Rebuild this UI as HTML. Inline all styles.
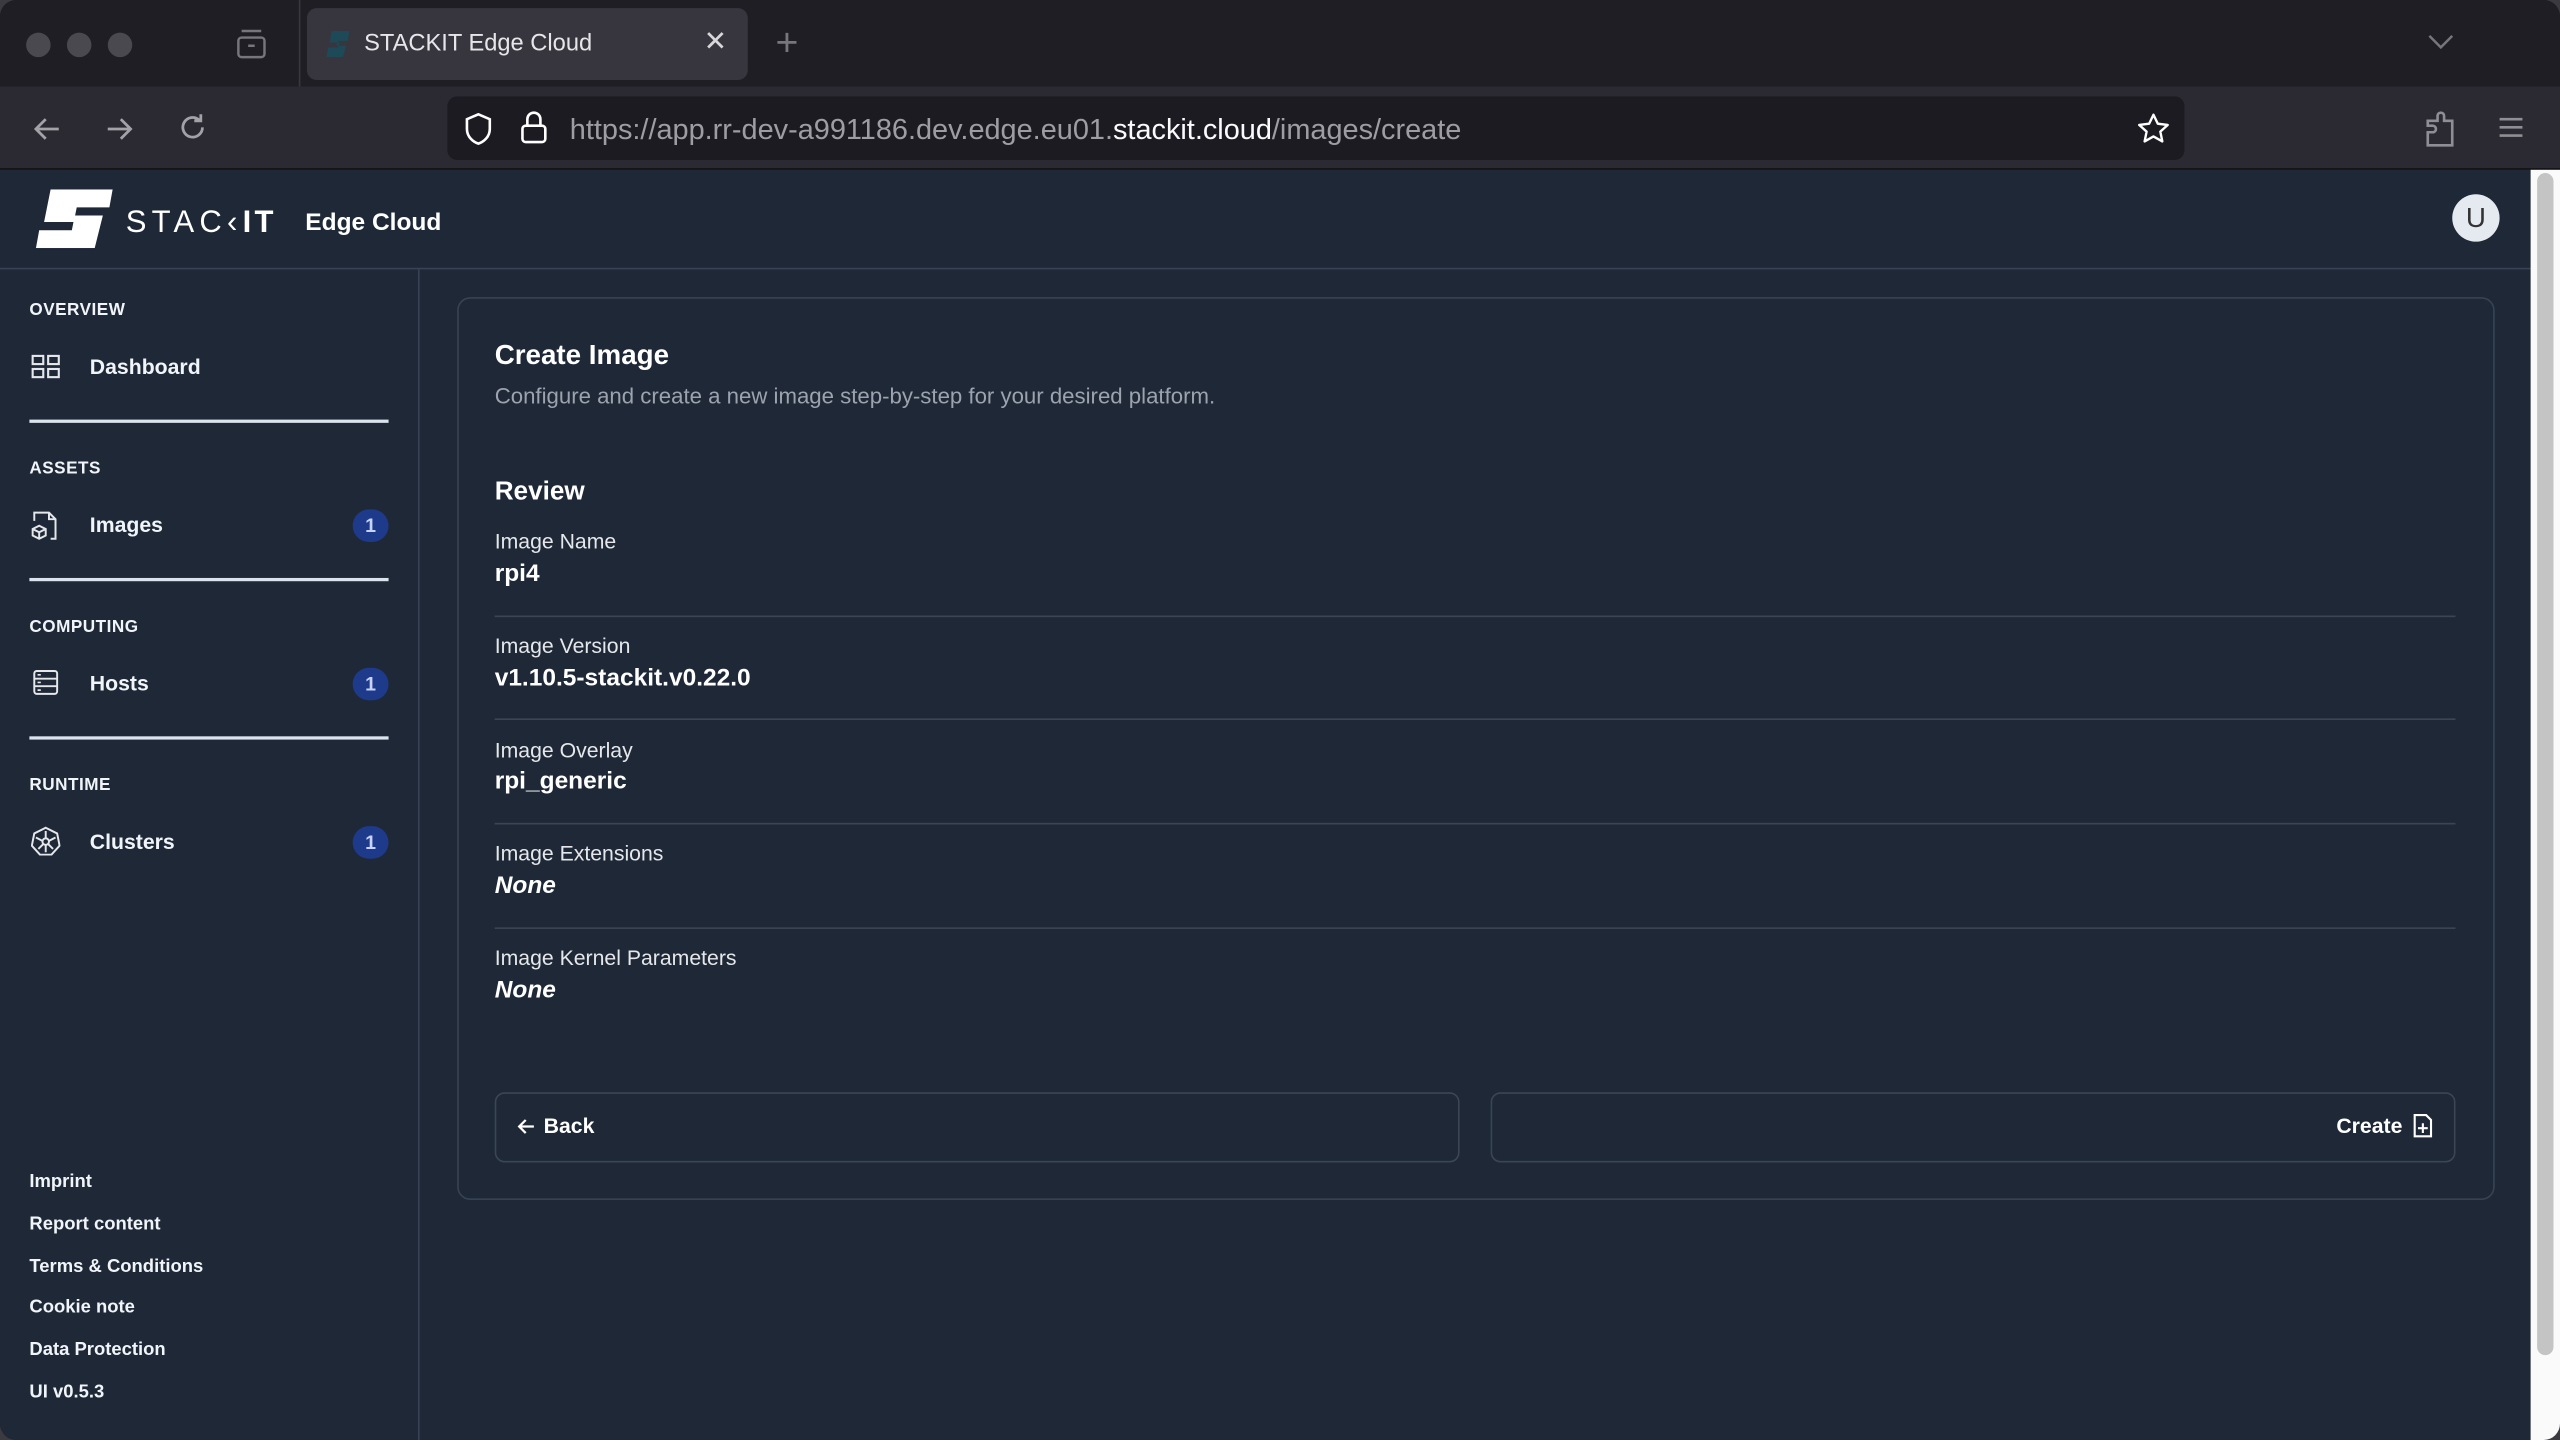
<!DOCTYPE html>
<html><head><meta charset="utf-8"><style>
html,body{margin:0;padding:0;width:2560px;height:1440px;overflow:hidden;background:#3a3a40;}
#w{position:absolute;left:0;top:0;width:1568px;height:882px;transform:scale(1.632653);transform-origin:0 0;font-family:"Liberation Sans",sans-serif;overflow:hidden;border-radius:10px;background:#1f1e25;}
.abs{position:absolute;}
.tabbar{left:0;top:0;width:1568px;height:53px;background:#1f1e25;}
.tool{left:0;top:53px;width:1568px;height:50px;background:#2b2a33;border-bottom:1px solid #111;}
.app{left:0;top:104px;width:1550px;height:778px;background:#1e2836;}
.sb{left:1550px;top:104px;width:18px;height:778px;background:#fafafa;}
.sbt{left:1554px;top:106px;width:10px;height:724px;background:#c4c4c4;border-radius:5px;}
.txt{color:#fff;white-space:nowrap;}
.nav{font-size:13px;font-weight:bold;color:#f1f5f9;}
.sec{font-size:10.5px;font-weight:bold;color:#f1f5f9;letter-spacing:.3px;}
.hr{height:2px;background:#dbe3ee;left:18px;width:220px;}
.badge{width:22px;height:20px;border-radius:11px;background:#1e3a8a;color:#c7d2fe;font-size:12px;font-weight:bold;text-align:center;line-height:20px;}
.lab{font-size:13px;color:#e5e7eb;}
.val{font-size:15px;font-weight:bold;color:#fff;}
.div{left:303px;width:1201px;height:1px;background:#3a4656;}
.foot{font-size:11.3px;font-weight:bold;color:#f1f5f9;left:18px;}
</style></head><body><div id="w">
<div class="abs tabbar"></div>
<div class="abs" style="left:16px;top:20px;width:15px;height:15px;border-radius:50%;background:#4a4950"></div>
<div class="abs" style="left:41px;top:20px;width:15px;height:15px;border-radius:50%;background:#4a4950"></div>
<div class="abs" style="left:66px;top:20px;width:15px;height:15px;border-radius:50%;background:#4a4950"></div>
<svg class="abs" style="left:144px;top:17px" width="20" height="20" viewBox="0 0 20 20" fill="none" stroke="#77767d" stroke-width="1.5"><rect x="2" y="6" width="16" height="12" rx="2"/><path d="M4 2h12M8 11h4"/></svg>
<div class="abs" style="left:183px;top:0;width:1px;height:53px;background:#38373f"></div>
<div class="abs" style="left:188px;top:5px;width:270px;height:44px;border-radius:6px;background:#37363e"></div>
<svg class="abs" style="left:200px;top:19px" width="14" height="16" viewBox="0 0 14 16"><path d="M3 0h11l-1 6H7l-1 3h6l-2 7H0l1-6h6l1-3H2z" fill="#1e4a57"/></svg>
<div class="abs txt" style="left:223px;top:19px;font-size:14.5px;color:#e6e6ea">STACKIT Edge Cloud</div>
<div class="abs txt" style="left:431px;top:16px;font-size:17px;color:#d8d8dc">✕</div>
<div class="abs txt" style="left:475px;top:13px;font-size:24px;color:#77767d;font-weight:300">+</div>
<svg class="abs" style="left:1486px;top:20px" width="18" height="12" viewBox="0 0 18 12" fill="none" stroke="#77767d" stroke-width="1.5"><path d="M2 2l7 7 7-7"/></svg>
<div class="abs tool"></div>
<svg class="abs" style="left:19px;top:69px" width="20" height="20" viewBox="0 0 20 20" fill="none" stroke="#a3a2a8" stroke-width="1.7"><path d="M17 10H3M9 4l-6 6 6 6"/></svg>
<svg class="abs" style="left:63px;top:69px" width="20" height="20" viewBox="0 0 20 20" fill="none" stroke="#a3a2a8" stroke-width="1.7"><path d="M3 10h14M11 4l6 6-6 6"/></svg>
<svg class="abs" style="left:108px;top:68px" width="20" height="20" viewBox="0 0 20 20" fill="none" stroke="#a3a2a8" stroke-width="1.7"><path d="M16 10a6 6 0 1 1-2-4.5M15 2v4h-4"/></svg>
<div class="abs" style="left:274px;top:59px;width:1064px;height:39px;border-radius:6px;background:#1c1b22"></div>
<svg class="abs" style="left:283px;top:68px" width="20" height="22" viewBox="0 0 20 22" fill="none" stroke="#fff" stroke-width="1.6"><path d="M10 2l7 3v6c0 5-4 8-7 9-3-1-7-4-7-9V5z"/></svg>
<svg class="abs" style="left:318px;top:67px" width="18" height="22" viewBox="0 0 18 22" fill="none" stroke="#fff" stroke-width="1.6"><rect x="2" y="10" width="14" height="10" rx="2"/><path d="M5 10V6a4 4 0 0 1 8 0v4"/></svg>
<div class="abs txt" style="left:349px;top:69px;font-size:17.7px;color:#9e9da4">https://app.rr-dev-a991186.dev.edge.eu01.<span style="color:#fbfbfe">stackit.cloud</span>/images/create</div>
<svg class="abs" style="left:1308px;top:68px" width="22" height="22" viewBox="0 0 24 24" fill="none" stroke="#fff" stroke-width="1.6" stroke-linejoin="round"><path d="M12 2.5l2.9 6 6.6.8-4.9 4.5 1.3 6.5L12 17l-5.9 3.3 1.3-6.5L2.5 9.3l6.6-.8z"/></svg>
<svg class="abs" style="left:1485px;top:67px" width="20" height="24" viewBox="0 0 20 24" fill="none" stroke="#8f8e94" stroke-width="1.6"><path d="M2 14h3a2 2 0 0 0 0-4H2V7h6V4a2 2 0 0 1 4 0v3h5v15H2z"/></svg>
<svg class="abs" style="left:1530px;top:71px" width="16" height="14" viewBox="0 0 16 14" stroke="#8f8e94" stroke-width="1.6"><path d="M1 2h14M1 7h14M1 12h14"/></svg>

<div class="abs app"></div>
<div class="abs" style="left:0;top:164px;width:1550px;height:1px;background:#374354"></div>
<div class="abs" style="left:256px;top:165px;width:1px;height:717px;background:#374354"></div>
<svg class="abs" style="left:22px;top:116px" width="48" height="36" viewBox="0 0 48 36"><path d="M9 0h38l-2 11H25l-1 5h17l-5 20H0l2-11h20l1-5H5z" fill="#fff"/></svg>
<div class="abs txt" style="left:77px;top:126px;font-size:19px;letter-spacing:3.2px;font-weight:300;width:104px;overflow:hidden">STAC‹<b style="font-weight:bold;letter-spacing:2px">IT</b></div>
<div class="abs txt" style="left:187px;top:128px;font-size:15px;font-weight:bold">Edge Cloud</div>
<div class="abs" style="left:1502px;top:119px;width:29px;height:29px;border-radius:50%;background:#e5eaf0;color:#333;font-size:17px;text-align:center;line-height:29px">U</div>

<div class="abs sec" style="left:18px;top:184px">OVERVIEW</div>
<svg class="abs" style="left:19px;top:217px" width="18" height="15" viewBox="0 0 18 15" fill="none" stroke="#e5e7eb" stroke-width="1.3"><rect x="1" y="1" width="6.5" height="5"/><rect x="10.5" y="1" width="6.5" height="5"/><rect x="1" y="9" width="6.5" height="5"/><rect x="10.5" y="9" width="6.5" height="5"/></svg>
<div class="abs nav" style="left:55px;top:217px">Dashboard</div>
<div class="abs hr" style="top:257px"></div>
<div class="abs sec" style="left:18px;top:281px">ASSETS</div>
<svg class="abs" style="left:18px;top:312px" width="18" height="19" viewBox="0 0 18 19" fill="none" stroke="#e5e7eb" stroke-width="1.2"><path d="M3 7V2h9l4 4v12h-3M12 2v4h4"/><path d="M6 10l4 2v4l-4 2-4-2v-4zM2 12l4 2 4-2M6 14v4"/></svg>
<div class="abs nav" style="left:55px;top:314px">Images</div>
<div class="abs badge" style="left:216px;top:312px">1</div>
<div class="abs hr" style="top:354px"></div>
<div class="abs sec" style="left:18px;top:378px">COMPUTING</div>
<svg class="abs" style="left:20px;top:410px" width="16" height="16" viewBox="0 0 16 16" fill="none" stroke="#e5e7eb" stroke-width="1.2"><rect x="1" y="1" width="14" height="14" rx="1.5"/><path d="M1 5.7h14M1 10.3h14"/><path d="M3 3.3h2M3 8h2M3 12.7h2" stroke-width="1"/></svg>
<div class="abs nav" style="left:55px;top:411px">Hosts</div>
<div class="abs badge" style="left:216px;top:409px">1</div>
<div class="abs hr" style="top:451px"></div>
<div class="abs sec" style="left:18px;top:475px">RUNTIME</div>
<svg class="abs" style="left:19px;top:506px" width="18" height="18" viewBox="0 0 18 18" fill="none" stroke="#e5e7eb" stroke-width="1.2"><path d="M9 1l7 3.5 1.5 7.5-5 5.5H5.5l-5-5.5L2 4.5z"/><circle cx="9" cy="9.5" r="2"/><path d="M9 3v4.5M9 11.5V16M3 7l4 2M15 7l-4 2M4.5 14l3-3M13.5 14l-3-3"/></svg>
<div class="abs nav" style="left:55px;top:508px">Clusters</div>
<div class="abs badge" style="left:216px;top:506px">1</div>

<div class="abs foot" style="top:718px">Imprint</div>
<div class="abs foot" style="top:744px">Report content</div>
<div class="abs foot" style="top:770px">Terms &amp; Conditions</div>
<div class="abs foot" style="top:795px">Cookie note</div>
<div class="abs foot" style="top:821px">Data Protection</div>
<div class="abs foot" style="top:847px">UI v0.5.3</div>

<div class="abs" style="left:280px;top:182px;width:1246px;height:551px;border:1px solid #374354;border-radius:8px"></div>
<div class="abs txt" style="left:303px;top:208px;font-size:17px;font-weight:bold">Create Image</div>
<div class="abs txt" style="left:303px;top:235px;font-size:13.6px;color:#9ca3af">Configure and create a new image step-by-step for your desired platform.</div>
<div class="abs txt" style="left:303px;top:293px;font-size:16px;font-weight:bold">Review</div>
<div class="abs lab" style="left:303px;top:324px">Image Name</div>
<div class="abs val" style="left:303px;top:343px">rpi4</div>
<div class="abs div" style="top:377px"></div>
<div class="abs lab" style="left:303px;top:388px">Image Version</div>
<div class="abs val" style="left:303px;top:407px">v1.10.5-stackit.v0.22.0</div>
<div class="abs div" style="top:440px"></div>
<div class="abs lab" style="left:303px;top:452px">Image Overlay</div>
<div class="abs val" style="left:303px;top:470px">rpi_generic</div>
<div class="abs div" style="top:504px"></div>
<div class="abs lab" style="left:303px;top:515px">Image Extensions</div>
<div class="abs val" style="left:303px;top:534px;font-style:italic">None</div>
<div class="abs div" style="top:568px"></div>
<div class="abs lab" style="left:303px;top:579px">Image Kernel Parameters</div>
<div class="abs val" style="left:303px;top:598px;font-style:italic">None</div>

<div class="abs" style="left:303px;top:669px;width:589px;height:41px;border:1px solid #3a4656;border-radius:6px"></div>
<svg class="abs" style="left:316px;top:684px" width="12" height="12" viewBox="0 0 12 12" fill="none" stroke="#fff" stroke-width="1.4"><path d="M11 6H2M6 2L2 6l4 4"/></svg>
<div class="abs txt" style="left:333px;top:682px;font-size:13px;font-weight:bold">Back</div>
<div class="abs" style="left:913px;top:669px;width:589px;height:41px;border:1px solid #3a4656;border-radius:6px"></div>
<div class="abs txt" style="left:1431px;top:682px;font-size:13px;font-weight:bold">Create</div>
<svg class="abs" style="left:1478px;top:682px" width="12" height="15" viewBox="0 0 12 15" fill="none" stroke="#fff" stroke-width="1.3"><path d="M1 1h7l3 3v10H1zM6 6v6M3 9h6"/></svg>

<div class="abs sb"></div><div class="abs sbt"></div>
</div></body></html>
